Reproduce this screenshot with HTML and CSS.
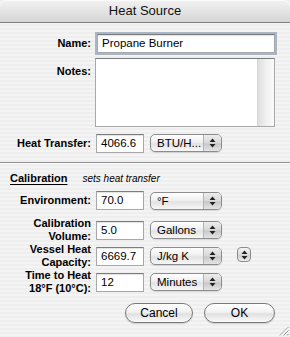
FILE: index.html
```html
<!DOCTYPE html>
<html>
<head>
<meta charset="utf-8">
<link rel="stylesheet" href="styles.css">
</head>
<body>
<div class="window">
  <div class="titlebar">Heat Source</div>
  <div class="form">
    <div class="row row-name">
      <div class="label">Name:</div>
      <div class="field"><div class="input input-wide focused">Propane Burner</div></div>
    </div>
    <div class="row row-notes">
      <div class="label label-top">Notes:</div>
      <div class="field"><div class="textarea"><div class="scrolltrack"></div></div></div>
    </div>
    <div class="row row-heat">
      <div class="label">Heat Transfer:</div>
      <div class="field">
        <div class="input input-num">4066.6</div>
        <div class="popup"><span class="popup-text">BTU/H...</span><span class="popup-arrows"><svg width="7" height="10" viewBox="0 0 7 10"><path d="M0.5 4 L3.5 0.5 L6.5 4 Z M0.5 6 L3.5 9.5 L6.5 6 Z" fill="#222"/></svg></span></div>
      </div>
    </div>
  </div>
  <div class="separator"></div>
  <div class="section-head">
    <span class="section-title">Calibration</span>
    <span class="section-note">sets heat transfer</span>
  </div>
  <div class="form form-cal">
    <div class="row row-env">
      <div class="label">Environment:</div>
      <div class="field">
        <div class="input input-num">70.0</div>
        <div class="popup"><span class="popup-text">°F</span><span class="popup-arrows"><svg width="7" height="10" viewBox="0 0 7 10"><path d="M0.5 4 L3.5 0.5 L6.5 4 Z M0.5 6 L3.5 9.5 L6.5 6 Z" fill="#222"/></svg></span></div>
      </div>
    </div>
    <div class="row row-vol">
      <div class="label label-2">Calibration<br>Volume:</div>
      <div class="field">
        <div class="input input-num">5.0</div>
        <div class="popup"><span class="popup-text">Gallons</span><span class="popup-arrows"><svg width="7" height="10" viewBox="0 0 7 10"><path d="M0.5 4 L3.5 0.5 L6.5 4 Z M0.5 6 L3.5 9.5 L6.5 6 Z" fill="#222"/></svg></span></div>
      </div>
    </div>
    <div class="row row-vessel">
      <div class="label label-2">Vessel Heat<br>Capacity:</div>
      <div class="field">
        <div class="input input-num">6669.7</div>
        <div class="popup"><span class="popup-text">J/kg K</span><span class="popup-arrows"><svg width="7" height="10" viewBox="0 0 7 10"><path d="M0.5 4 L3.5 0.5 L6.5 4 Z M0.5 6 L3.5 9.5 L6.5 6 Z" fill="#222"/></svg></span></div>
        <div class="stepper"><svg width="7" height="10" viewBox="0 0 7 10"><path d="M0.5 4 L3.5 0.5 L6.5 4 Z M0.5 6 L3.5 9.5 L6.5 6 Z" fill="#222"/></svg></div>
      </div>
    </div>
    <div class="row row-time">
      <div class="label label-2">Time to Heat<br>18°F (10°C):</div>
      <div class="field">
        <div class="input input-num">12</div>
        <div class="popup"><span class="popup-text">Minutes</span><span class="popup-arrows"><svg width="7" height="10" viewBox="0 0 7 10"><path d="M0.5 4 L3.5 0.5 L6.5 4 Z M0.5 6 L3.5 9.5 L6.5 6 Z" fill="#222"/></svg></span></div>
      </div>
    </div>
  </div>
  <div class="buttons">
    <div class="button button-cancel">Cancel</div>
    <div class="button button-ok">OK</div>
  </div>
  <svg class="grip" width="10" height="10" viewBox="0 0 10 10"><path d="M9.5 1 L1 9.5 M9.5 4.5 L4.5 9.5 M9.5 8 L8 9.5" stroke="#8a8a8a" stroke-width="1"/><path d="M9.5 2 L2 9.5 M9.5 5.5 L5.5 9.5" stroke="#fff" stroke-width="1"/></svg>
</div>
</body>
</html>
```

FILE: styles.css
```css
html, body {
  margin: 0;
  padding: 0;
}
body {
  width: 290px;
  height: 337px;
  overflow: hidden;
  font-family: "Liberation Sans", Arial, sans-serif;
  color: #000;
}
.window {
  position: relative;
  width: 290px;
  height: 337px;
  background: repeating-linear-gradient(to bottom, #eeeeee 0, #eeeeee 2px, #f4f4f4 2px, #f4f4f4 4px);
  overflow: hidden;
}
.titlebar {
  height: 22px;
  line-height: 22px;
  text-align: center;
  font-size: 13px;
  color: #111;
  background: linear-gradient(to bottom, #f2f2f2 0%, #e4e4e4 50%, #d6d6d6 100%);
  border-bottom: 1px solid #7f7f7f;
  border-radius: 6px 6px 0 0;
  box-shadow: inset 0 1px 0 #fbfbfb;
}
.form {
  padding-top: 10px;
  display: flex;
  flex-direction: column;
}
.row {
  display: grid;
  grid-template-columns: 91px 1fr;
  column-gap: 4px;
  align-items: center;
}
.label {
  text-align: right;
  font-weight: bold;
  font-size: 11px;
  line-height: 13px;
}
.label-top {
  align-self: start;
  padding-top: 7px;
}
.label-2 {
  line-height: 13px;
}
.field {
  display: flex;
  align-items: center;
}
.input {
  box-sizing: border-box;
  height: 19px;
  background: #fff;
  border: 1px solid #a8a8a8;
  border-top-color: #7c7c7c;
  box-shadow: inset 0 1px 1px rgba(0,0,0,0.12);
  font-size: 11.5px;
  line-height: 17px;
  padding-left: 4px;
  white-space: nowrap;
}
.input-wide {
  width: 178px;
  margin-left: 2px;
}
.focused {
  box-shadow: 0 0 0 2px #a9b6c6, inset 0 1px 1px rgba(0,0,0,0.12);
}
.input-num {
  width: 48px;
  margin-left: 1px;
}
.row-name {
  height: 19px;
  margin-top: 1px;
}
.row-notes {
  margin-top: 5px;
}
.textarea {
  box-sizing: border-box;
  width: 180px;
  height: 69px;
  background: #fff;
  border: 1px solid #a8a8a8;
  border-top-color: #7c7c7c;
  display: flex;
  justify-content: flex-end;
}
.scrolltrack {
  width: 16px;
  height: 100%;
  border-left: 1px solid #d4d4d4;
  background: linear-gradient(to right, #dedede, #f0f0f0 50%, #fafafa);
}
.row-heat {
  margin-top: 6px;
  height: 20px;
}
.popup {
  box-sizing: border-box;
  margin-left: 6px;
  width: 72px;
  height: 18px;
  border: 1px solid #8c8c8c;
  border-radius: 5px;
  background: linear-gradient(to bottom, #ffffff 0%, #f0f0f0 45%, #e2e2e2 55%, #f7f7f7 100%);
  display: flex;
  align-items: stretch;
  font-size: 11.5px;
  box-shadow: 0 1px 1px rgba(0,0,0,0.12);
}
.popup-text {
  flex: 1;
  padding-left: 6px;
  line-height: 16px;
  white-space: nowrap;
  overflow: hidden;
}
.popup-arrows {
  width: 17px;
  border-left: 1px solid #b4b4b4;
  border-radius: 0 4px 4px 0;
  background: linear-gradient(to bottom, #ececec 0%, #d8d8d8 50%, #c8c8c8 55%, #e4e4e4 100%);
  display: flex;
  align-items: center;
  justify-content: center;
}
.stepper {
  box-sizing: border-box;
  margin-left: 15px;
  width: 14px;
  height: 15px;
  border: 1px solid #8c8c8c;
  border-radius: 4px;
  background: linear-gradient(to bottom, #f4f4f4 0%, #dcdcdc 50%, #cdcdcd 55%, #ececec 100%);
  display: flex;
  align-items: center;
  justify-content: center;
  margin-top: -3px;
}
.separator {
  margin-top: 9px;
  height: 1px;
  background: #8f8f8f;
  border-bottom: 1px solid #fbfbfb;
}
.section-head {
  margin-top: 8px;
  padding-left: 10px;
  height: 13px;
  line-height: 13px;
  display: flex;
  align-items: baseline;
}
.section-title {
  font-weight: bold;
  font-size: 11px;
  text-decoration: underline;
  text-underline-offset: 2px;
}
.section-note {
  margin-left: 15px;
  font-style: italic;
  font-size: 10px;
}
.form-cal {
  padding-top: 6px;
}
.row-env {
  height: 19px;
}
.row-vol {
  margin-top: 7px;
  height: 20px;
}
.row-vessel {
  margin-top: 6px;
  height: 19px;
}
.row-time {
  margin-top: 7px;
  height: 19px;
}
.buttons {
  margin-top: 15px;
  display: flex;
  justify-content: flex-end;
  padding-right: 15px;
  gap: 11px;
}
.button {
  box-sizing: border-box;
  height: 20px;
  border: 1px solid #7a7a7a;
  border-radius: 10px;
  background: linear-gradient(to bottom, #ffffff 0%, #f2f2f2 45%, #e0e0e0 55%, #fafafa 100%);
  box-shadow: 0 1px 1px rgba(0,0,0,0.15);
  font-size: 12px;
  line-height: 18px;
  text-align: center;
}
.button-cancel {
  width: 68px;
}
.button-ok {
  width: 71px;
}
.grip {
  position: absolute;
  right: 1px;
  bottom: 1px;
}
```
